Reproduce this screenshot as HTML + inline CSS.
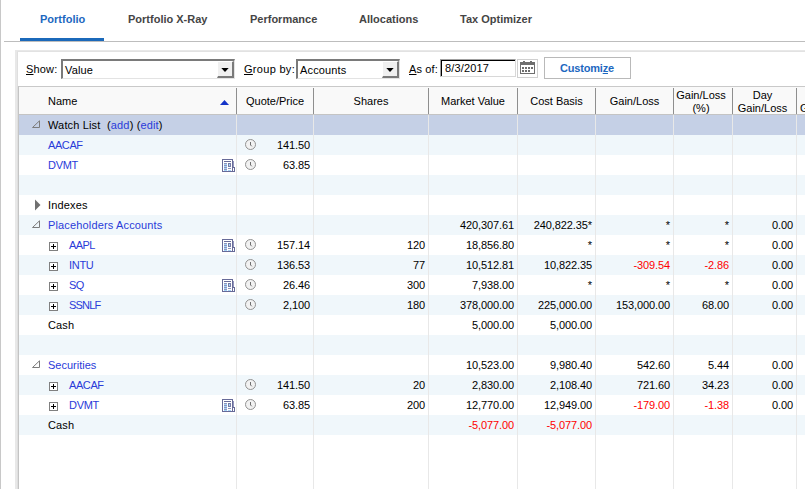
<!DOCTYPE html>
<html><head><meta charset="utf-8"><style>
*{margin:0;padding:0;box-sizing:border-box}
html,body{width:805px;height:489px;overflow:hidden;background:#fff}
body{position:relative;font-family:"Liberation Sans",sans-serif;font-size:11px;color:#000}
.a{position:absolute}
.tab{position:absolute;top:9px;height:20px;line-height:20px;font-weight:700;font-size:11px;color:#454545;white-space:nowrap}
.lbl{position:absolute;top:59px;height:20px;line-height:20px;white-space:nowrap;color:#000;letter-spacing:0.15px}
.u{text-decoration:underline}
.ht{position:absolute;white-space:nowrap;text-align:center;line-height:13px}
.row{position:absolute;left:19px;width:786px;height:20px}
.c{position:absolute;top:0;height:20px;line-height:20px;white-space:nowrap;letter-spacing:0.15px}
.c.r{text-align:right;letter-spacing:-0.1px}
.lnk{color:#2a3bd9}
.neg{color:#f00}
.pb{position:absolute;width:9px;height:9px;border:1px solid #808080;background:#fff}
.pb:before{content:"";position:absolute;left:1px;top:3px;width:5px;height:1px;background:#000}
.pb:after{content:"";position:absolute;left:3px;top:1px;width:1px;height:5px;background:#000}
.vl{position:absolute;top:115px;width:1px;height:374px;background:#e8e8e8}
.hv{position:absolute;top:88px;width:1px;height:26px;background:#8e8e8e}
</style></head><body>
<svg width="0" height="0" style="position:absolute"><defs>
<g id="clock"><circle cx="5.5" cy="5.5" r="5" fill="#f2f2f2" stroke="#929292" stroke-width="1"/><path d="M5.5 3V6L6.8 7.3" fill="none" stroke="#707070" stroke-width="1"/></g>
<g id="news" shape-rendering="crispEdges">
<rect x="11" y="2" width="1" height="7" fill="#9497bd"/>
<rect x="0" y="0" width="11" height="13" fill="#676a98"/>
<rect x="1" y="1" width="9" height="11" fill="#fff"/>
<rect x="11" y="8" width="2" height="5" fill="#676a98"/>
<rect x="11" y="9" width="1" height="3" fill="#fff"/>
<rect x="2" y="2" width="7" height="1" fill="#676a98"/>
<rect x="2" y="4" width="3" height="8" fill="#a6d2f7"/>
<rect x="2" y="4" width="3" height="1" fill="#9094bb"/><rect x="2" y="6" width="3" height="1" fill="#9094bb"/><rect x="2" y="8" width="3" height="1" fill="#9094bb"/><rect x="2" y="10" width="3" height="1" fill="#9094bb"/>
<rect x="6" y="4" width="3" height="4" fill="#777ba6"/>
<rect x="7" y="5" width="1" height="2" fill="#a6d2f7"/>
<rect x="6" y="9" width="3" height="1" fill="#8c90b8"/>
<rect x="6" y="11" width="3" height="1" fill="#a6d2f7"/>
</g>
</defs></svg>
<div class="a" style="left:0;top:0;width:1px;height:489px;background:#c8c8c8"></div>
<div class="tab" style="left:40px;color:#1d68bf">Portfolio</div>
<div class="tab" style="left:128px">Portfolio X-Ray</div>
<div class="tab" style="left:250px">Performance</div>
<div class="tab" style="left:359px">Allocations</div>
<div class="tab" style="left:460px">Tax Optimizer</div>
<div class="a" style="left:4px;top:41px;width:801px;height:1px;background:#bdbdbd"></div>
<div class="a" style="left:20px;top:38px;width:84px;height:3px;background:#1b69ba"></div>
<div class="a" style="left:15px;top:50px;width:790px;height:2px;background:#e8e8e8"></div>
<div class="a" style="left:15px;top:50px;width:3px;height:439px;background:#e8e8e8"></div>
<div class="a" style="left:18px;top:86px;width:1px;height:403px;background:#c4c4c4"></div>
<div class="a" style="left:17px;top:51px;width:1px;height:438px;background:#dfdfdf"></div>
<div class="a" style="left:17px;top:51px;width:788px;height:1px;background:#e2e2e2"></div>
<div class="lbl" style="left:26px"><span class="u">S</span>how:</div>
<div class="a" style="left:61px;top:59px;width:174px;height:20px;border-top:2px solid #7a7a7a;border-left:2px solid #7a7a7a;border-bottom:1px solid #e3e3e3;border-right:1px solid #e3e3e3;background:#fff"></div>
<div class="lbl" style="left:65px;top:60px">Value</div>
<div class="a" style="left:217px;top:61px;width:17px;height:17px;background:#f0f0f0;border-top:1px solid #fff;border-left:1px solid #fff;border-right:2px solid #7a7a7a;border-bottom:2px solid #7a7a7a"></div>
<svg class="a" style="left:221px;top:68px" width="9" height="5"><path d="M0.3 0H7.7L4 4Z" fill="#000"/></svg>
<div class="lbl" style="left:244px;letter-spacing:0.3px"><span class="u">G</span>roup by:</div>
<div class="a" style="left:296px;top:59px;width:104px;height:20px;border-top:2px solid #7a7a7a;border-left:2px solid #7a7a7a;border-bottom:1px solid #e3e3e3;border-right:1px solid #e3e3e3;background:#fff"></div>
<div class="lbl" style="left:300px;top:60px">Accounts</div>
<div class="a" style="left:382px;top:61px;width:17px;height:17px;background:#f0f0f0;border-top:1px solid #fff;border-left:1px solid #fff;border-right:2px solid #7a7a7a;border-bottom:2px solid #7a7a7a"></div>
<svg class="a" style="left:386px;top:68px" width="9" height="5"><path d="M0.3 0H7.7L4 4Z" fill="#000"/></svg>
<div class="lbl" style="left:409px"><span class="u">A</span>s of:</div>
<div class="a" style="left:440px;top:59px;width:76px;height:18px;border-top:1px solid #a0a0a0;border-left:1px solid #a0a0a0;border-bottom:1px solid #d8d8d8;border-right:1px solid #d8d8d8;background:#fff;box-shadow:inset 1px 1px 0 #000"></div>
<div class="lbl" style="left:445px;top:58px">8/3/2017</div>
<div class="a" style="left:517px;top:59px;width:21px;height:19px;border:1px solid #d0d0d0;background:#fff"></div>
<svg class="a" style="left:520px;top:61px" width="15" height="14" viewBox="0 0 15 14">
<rect x="0" y="1" width="15" height="12" fill="#6e6e6e"/>
<rect x="1" y="4" width="13" height="8" fill="#fff"/>
<rect x="3" y="0" width="2" height="2" fill="#6e6e6e"/><rect x="10" y="0" width="2" height="2" fill="#6e6e6e"/>
<g fill="#6e6e6e"><rect x="2" y="6" width="2" height="2"/><rect x="5" y="6" width="2" height="2"/><rect x="8" y="6" width="2" height="2"/><rect x="11" y="6" width="2" height="2"/>
<rect x="2" y="9" width="2" height="2"/><rect x="5" y="9" width="2" height="2"/><rect x="8" y="9" width="2" height="2"/></g></svg>
<div class="a" style="left:544px;top:57px;width:87px;height:22px;border:1px solid #b9b9b9;background:#fff"></div>
<div class="lbl" style="left:544px;top:58px;width:86px;text-align:center;font-weight:700;color:#1d68bf;letter-spacing:-0.2px">Customi<span class="u">z</span>e</div>
<div class="a" style="left:19px;top:86px;width:786px;height:1px;background:#c9c9c9"></div>
<div class="a" style="left:19px;top:87px;width:786px;height:27px;background:#f9f9f9"></div>
<div class="a" style="left:19px;top:114px;width:786px;height:1px;background:#c4c4c4"></div>
<div class="hv" style="left:236px"></div>
<div class="hv" style="left:313px"></div>
<div class="hv" style="left:428px"></div>
<div class="hv" style="left:517px"></div>
<div class="hv" style="left:595px"></div>
<div class="hv" style="left:673px"></div>
<div class="hv" style="left:732px"></div>
<div class="hv" style="left:796px"></div>
<div class="ht" style="left:48px;top:95px">Name</div>
<svg class="a" style="left:220px;top:100px" width="9" height="5"><path d="M0 5H9L4.5 0Z" fill="#1434c8"/></svg>
<div class="ht" style="left:237px;width:76px;top:95px">Quote/Price</div>
<div class="ht" style="left:314px;width:114px;top:95px">Shares</div>
<div class="ht" style="left:429px;width:88px;top:95px">Market Value</div>
<div class="ht" style="left:518px;width:77px;top:95px">Cost Basis</div>
<div class="ht" style="left:596px;width:77px;top:95px">Gain/Loss</div>
<div class="ht" style="left:674px;width:58px;top:89px;margin-left:-2px">Gain/Loss<br>(%)</div>
<div class="ht" style="left:733px;width:63px;top:89px;margin-left:-2px">Day<br>Gain/Loss</div>
<div class="ht" style="left:800px;top:102px">G</div>
<div class="row" style="top:115px;background:#c5d0e6">
<svg class="a" style="left:13px;top:5px" width="9" height="9"><path d="M7.5 0.8V7.5H0.5Z" fill="none" stroke="#7c7c7c" stroke-width="1"/></svg>
<div class="c" style="left:29px">Watch List</div>
<div class="c" style="left:88px">(<span class="lnk">add</span>) (<span class="lnk">edit</span>)</div>
</div>
<div class="row" style="top:135px;background:#f0f7fb">
<div class="c lnk" style="left:29px;letter-spacing:-0.4px">AACAF</div>
<svg class="a" style="left:226px;top:4px" width="12" height="12"><use href="#clock"/></svg>
<div class="c r" style="left:217px;width:74px">141.50</div>
</div>
<div class="row" style="top:155px;background:#fff">
<div class="c lnk" style="left:29px;letter-spacing:-0.3px">DVMT</div>
<svg class="a" style="left:203px;top:4px" width="14" height="14"><use href="#news"/></svg>
<svg class="a" style="left:226px;top:4px" width="12" height="12"><use href="#clock"/></svg>
<div class="c r" style="left:217px;width:74px">63.85</div>
</div>
<div class="row" style="top:175px;background:#f0f7fb">
</div>
<div class="row" style="top:195px;background:#fff">
<svg class="a" style="left:16px;top:4px" width="6" height="12"><path d="M0 0.5V11.5L5.5 6Z" fill="#707070"/></svg>
<div class="c" style="left:29px">Indexes</div>
</div>
<div class="row" style="top:215px;background:#f0f7fb">
<svg class="a" style="left:13px;top:5px" width="9" height="9"><path d="M7.5 0.8V7.5H0.5Z" fill="none" stroke="#7c7c7c" stroke-width="1"/></svg>
<div class="c lnk" style="left:29px;letter-spacing:0.15px">Placeholders Accounts</div>
<div class="c r" style="left:409px;width:86px">420,307.61</div>
<div class="c r" style="left:498px;width:75px">240,822.35*</div>
<div class="c r" style="left:576px;width:75px">*</div>
<div class="c r" style="left:654px;width:56px">*</div>
<div class="c r" style="left:713px;width:61px">0.00</div>
</div>
<div class="row" style="top:235px;background:#fff">
<div class="pb" style="left:30px;top:7px"></div>
<div class="c lnk" style="left:50px;letter-spacing:-0.6px">AAPL</div>
<svg class="a" style="left:203px;top:4px" width="14" height="14"><use href="#news"/></svg>
<svg class="a" style="left:226px;top:4px" width="12" height="12"><use href="#clock"/></svg>
<div class="c r" style="left:217px;width:74px">157.14</div>
<div class="c r" style="left:294px;width:112px">120</div>
<div class="c r" style="left:409px;width:86px">18,856.80</div>
<div class="c r" style="left:498px;width:75px">*</div>
<div class="c r" style="left:576px;width:75px">*</div>
<div class="c r" style="left:654px;width:56px">*</div>
<div class="c r" style="left:713px;width:61px">0.00</div>
</div>
<div class="row" style="top:255px;background:#f0f7fb">
<div class="pb" style="left:30px;top:7px"></div>
<div class="c lnk" style="left:50px;letter-spacing:-0.3px">INTU</div>
<svg class="a" style="left:226px;top:4px" width="12" height="12"><use href="#clock"/></svg>
<div class="c r" style="left:217px;width:74px">136.53</div>
<div class="c r" style="left:294px;width:112px">77</div>
<div class="c r" style="left:409px;width:86px">10,512.81</div>
<div class="c r" style="left:498px;width:75px">10,822.35</div>
<div class="c r neg" style="left:576px;width:75px">-309.54</div>
<div class="c r neg" style="left:654px;width:56px">-2.86</div>
<div class="c r" style="left:713px;width:61px">0.00</div>
</div>
<div class="row" style="top:275px;background:#fff">
<div class="pb" style="left:30px;top:7px"></div>
<div class="c lnk" style="left:50px;letter-spacing:-0.5px">SQ</div>
<svg class="a" style="left:203px;top:4px" width="14" height="14"><use href="#news"/></svg>
<svg class="a" style="left:226px;top:4px" width="12" height="12"><use href="#clock"/></svg>
<div class="c r" style="left:217px;width:74px">26.46</div>
<div class="c r" style="left:294px;width:112px">300</div>
<div class="c r" style="left:409px;width:86px">7,938.00</div>
<div class="c r" style="left:498px;width:75px">*</div>
<div class="c r" style="left:576px;width:75px">*</div>
<div class="c r" style="left:654px;width:56px">*</div>
<div class="c r" style="left:713px;width:61px">0.00</div>
</div>
<div class="row" style="top:295px;background:#f0f7fb">
<div class="pb" style="left:30px;top:7px"></div>
<div class="c lnk" style="left:50px;letter-spacing:-0.8px">SSNLF</div>
<svg class="a" style="left:226px;top:4px" width="12" height="12"><use href="#clock"/></svg>
<div class="c r" style="left:217px;width:74px">2,100</div>
<div class="c r" style="left:294px;width:112px">180</div>
<div class="c r" style="left:409px;width:86px">378,000.00</div>
<div class="c r" style="left:498px;width:75px">225,000.00</div>
<div class="c r" style="left:576px;width:75px">153,000.00</div>
<div class="c r" style="left:654px;width:56px">68.00</div>
<div class="c r" style="left:713px;width:61px">0.00</div>
</div>
<div class="row" style="top:315px;background:#fff">
<div class="c" style="left:29px">Cash</div>
<div class="c r" style="left:409px;width:86px">5,000.00</div>
<div class="c r" style="left:498px;width:75px">5,000.00</div>
</div>
<div class="row" style="top:335px;background:#f0f7fb">
</div>
<div class="row" style="top:355px;background:#fff">
<svg class="a" style="left:13px;top:5px" width="9" height="9"><path d="M7.5 0.8V7.5H0.5Z" fill="none" stroke="#7c7c7c" stroke-width="1"/></svg>
<div class="c lnk" style="left:29px;letter-spacing:0px">Securities</div>
<div class="c r" style="left:409px;width:86px">10,523.00</div>
<div class="c r" style="left:498px;width:75px">9,980.40</div>
<div class="c r" style="left:576px;width:75px">542.60</div>
<div class="c r" style="left:654px;width:56px">5.44</div>
<div class="c r" style="left:713px;width:61px">0.00</div>
</div>
<div class="row" style="top:375px;background:#f0f7fb">
<div class="pb" style="left:30px;top:7px"></div>
<div class="c lnk" style="left:50px;letter-spacing:-0.4px">AACAF</div>
<svg class="a" style="left:226px;top:4px" width="12" height="12"><use href="#clock"/></svg>
<div class="c r" style="left:217px;width:74px">141.50</div>
<div class="c r" style="left:294px;width:112px">20</div>
<div class="c r" style="left:409px;width:86px">2,830.00</div>
<div class="c r" style="left:498px;width:75px">2,108.40</div>
<div class="c r" style="left:576px;width:75px">721.60</div>
<div class="c r" style="left:654px;width:56px">34.23</div>
<div class="c r" style="left:713px;width:61px">0.00</div>
</div>
<div class="row" style="top:395px;background:#fff">
<div class="pb" style="left:30px;top:7px"></div>
<div class="c lnk" style="left:50px;letter-spacing:-0.3px">DVMT</div>
<svg class="a" style="left:203px;top:4px" width="14" height="14"><use href="#news"/></svg>
<svg class="a" style="left:226px;top:4px" width="12" height="12"><use href="#clock"/></svg>
<div class="c r" style="left:217px;width:74px">63.85</div>
<div class="c r" style="left:294px;width:112px">200</div>
<div class="c r" style="left:409px;width:86px">12,770.00</div>
<div class="c r" style="left:498px;width:75px">12,949.00</div>
<div class="c r neg" style="left:576px;width:75px">-179.00</div>
<div class="c r neg" style="left:654px;width:56px">-1.38</div>
<div class="c r" style="left:713px;width:61px">0.00</div>
</div>
<div class="row" style="top:415px;background:#f0f7fb">
<div class="c" style="left:29px">Cash</div>
<div class="c r neg" style="left:409px;width:86px">-5,077.00</div>
<div class="c r neg" style="left:498px;width:75px">-5,077.00</div>
</div>
<div class="vl" style="left:236px"></div>
<div class="vl" style="left:313px"></div>
<div class="vl" style="left:428px"></div>
<div class="vl" style="left:517px"></div>
<div class="vl" style="left:595px"></div>
<div class="vl" style="left:673px"></div>
<div class="vl" style="left:732px"></div>
<div class="vl" style="left:796px"></div>
</body></html>
